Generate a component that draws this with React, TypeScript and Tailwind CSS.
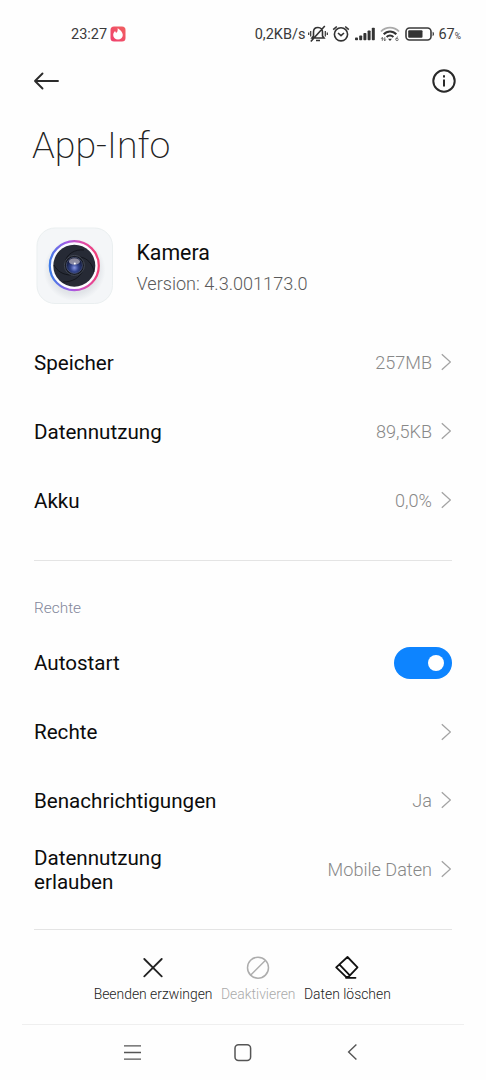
import type { ReactNode } from "react";

function Chevron() {
  return (
    <svg width="10" height="18" viewBox="0 0 10 18" fill="none" stroke="#a3a3a3" strokeWidth="1.3" className="mr-px ml-[9px] shrink-0">
      <path d="M0.8 1.200 9.400 9 0.8 16.800" />
    </svg>
  );
}

function Row({ label, value, children }: { label: ReactNode; value?: string; children?: ReactNode }) {
  return (
    <div className="flex h-[69px] items-center justify-between">
      <span className="text-[20.6px] leading-[24px] text-[#0c0c0c]">{label}</span>
      {children ?? (
        <span className="flex items-center">
          <span className="text-[18.1px] font-light text-[#888]">{value}</span>
          <Chevron />
        </span>
      )}
    </div>
  );
}

function StatusBar() {
  return (
    <div className="mt-[22px] flex h-6 items-center pr-[25px] pl-[71px] text-[#3a3a3a]">
      <span className="mt-px text-[14.5px]">23:27</span>
      <svg width="16" height="16" viewBox="0 0 16 16" className="ml-[3px]">
        <defs>
          <linearGradient id="flame" x1="0" y1="1" x2="1" y2="0">
            <stop offset="0" stopColor="#f0406f" />
            <stop offset="1" stopColor="#f0605f" />
          </linearGradient>
        </defs>
        <rect x="0.5" y="0.5" width="15" height="15" rx="3.5" fill="url(#flame)" />
        <path d="M7.6 2.2C10 3.500 12.800 6 12.800 9a4.800 4.600 0 0 1-9.600 0c0-1.700.9-3 2-3.900.2 1 .6 1.500 1.200 1.600C7.500 6 7.900 4 7.600 2.200z" fill="#fff" />
      </svg>
      <span className="mt-px ml-auto text-[14.500px]">0,2KB/s</span>
      <svg width="20" height="18" viewBox="0 0 20 18" fill="none" stroke="#333" strokeWidth="1.6" className="ml-[3px]">
        <path d="M4 13h12l-1.500-2V7c0-2.500-1.700-4.500-4.500-4.500S5.500 4.500 5.500 7v4zM8 15.500h4M2.800 16.500 16.800 1" />
        <path d="M2.700 6v5.500M17.300 6v5.500M.7 7.500v2.500M19.300 7.500v2.500" strokeWidth="1.200" />
      </svg>
      <svg width="18" height="18" viewBox="0 0 18 18" fill="none" stroke="#333" strokeWidth="1.600" className="ml-[4px]">
        <circle cx="9" cy="9.300" r="6.600" />
        <path d="M1.200 4.600 4.800 1.500M16.800 4.600 13.200 1.500M6 8 9 10.700l3-2.700" />
      </svg>
      <svg width="20" height="14" viewBox="0 0 20 14" fill="#333" className="ml-[5px]">
        <rect x="0" y="10.500" width="3" height="2.800" rx=".8" />
        <rect x="4.200" y="8.500" width="3" height="4.800" rx=".8" />
        <rect x="8.400" y="6" width="3" height="7.300" rx=".8" />
        <rect x="12.600" y="3.400" width="3" height="9.900" rx=".8" />
        <rect x="16.800" y=".7" width="3" height="12.600" rx=".8" />
      </svg>
      <svg width="20" height="16" viewBox="0 0 20 16" fill="none" className="ml-[5px]">
        <path d="M1 5.500c5-5.200 13-5.200 18 0" stroke="#aaa" strokeWidth="1.800" />
        <path d="M3.700 8.300c3.500-3.800 9.100-3.800 12.600 0M6.600 11c2-2.100 4.800-2.100 6.800 0" stroke="#333" strokeWidth="2" />
        <path d="m10 15-2-2.200h4z" fill="#333" />
        <path d="M2.300 11.500v3.300M4.800 11.300v3.300M1.200 12.700l1.100-1.200 1 1.200M3.800 13.500l1 1.200 1-1.200" stroke="#444" strokeWidth=".8" />
        <path d="M18 10.800c-1.500.5-2.200 1.600-2.200 2.700a1.200 1.200 0 1 0 1.300-1.200c-.7 0-1.100.4-1.300.9" stroke="#555" strokeWidth=".8" />
      </svg>
      <svg width="30" height="14" viewBox="0 0 30 14" className="ml-[5px]">
        <rect x="1" y="1" width="25" height="12" rx="3.500" fill="none" stroke="#3a3a3a" strokeWidth="1.600" />
        <rect x="3.200" y="3.200" width="14.300" height="7.600" rx="1" fill="#333" />
        <path d="M27.600 4.800c1.800.4 1.800 4 0 4.400z" fill="#333" />
      </svg>
      <span className="mt-px ml-[3px] text-[14.500px]">67</span>
      <span className="mt-[4px] text-[8.500px]">%</span>
    </div>
  );
}

function CameraIcon() {
  return (
    <svg width="77" height="77" viewBox="0 0 77 77">
      <defs>
        <linearGradient id="ring" x1="0" y1=".55" x2="1" y2=".45">
          <stop offset="0" stopColor="#3c7be8" />
          <stop offset=".4" stopColor="#a45be6" />
          <stop offset=".7" stopColor="#dd4cab" />
          <stop offset="1" stopColor="#f23e72" />
        </linearGradient>
        <radialGradient id="lens" cx=".5" cy=".65" r=".6">
          <stop offset="0" stopColor="#8997e4" />
          <stop offset=".4" stopColor="#34468f" />
          <stop offset="1" stopColor="#0b1028" />
        </radialGradient>
        <radialGradient id="shade">
          <stop offset=".75" stopColor="#9ca3af" stopOpacity=".22" />
          <stop offset="1" stopColor="#9ca3af" stopOpacity="0" />
        </radialGradient>
      </defs>
      <rect x="1" y="1" width="75.500" height="75.500" rx="18" fill="#f4f6f8" stroke="#eaeff0" />
      <circle cx="38.500" cy="43" r="31" fill="url(#shade)" />
      <circle cx="38.300" cy="38.700" r="24.500" fill="#fcfcff" stroke="url(#ring)" strokeWidth="2.200" />
      <circle cx="38.300" cy="38.700" r="21" fill="#262a35" />
      <g fill="none" stroke="#0e1017" strokeWidth=".8">
        <path d="M29 36C30 27 39 22 48 23M44 30c8 1 13 8 14 15M47 43c-3 8-11 12-20 12M35 48c-8 0-14-4-17-10" />
      </g>
      <circle cx="38.400" cy="38.400" r="10" fill="#161922" stroke="#444954" />
      <circle cx="38.400" cy="38.400" r="8" fill="url(#lens)" stroke="#5e6992" strokeWidth=".6" />
      <ellipse cx="38.400" cy="34.500" rx="5.500" ry="3.200" fill="#a9a5b4" opacity=".8" />
      <circle cx="38.800" cy="36.500" r="1" fill="#fff" />
    </svg>
  );
}

function Action({ label, className, children }: { label: string; className: string; children: ReactNode }) {
  return (
    <div className={`flex flex-col items-center ${className}`}>
      <div className="flex h-[26px] items-center">{children}</div>
      <span className="mt-[3px] text-[13.900px] leading-[20px] font-light whitespace-nowrap">{label}</span>
    </div>
  );
}

export default function App() {
  return (
    <div className="flex h-[1080px] w-[486px] flex-col overflow-hidden bg-[#fefefe] font-[Roboto,sans-serif]">
      <StatusBar />
      <header className="flex h-[70px] items-center justify-between pr-[30px] pl-[33px]">
        <svg width="27" height="20" viewBox="0 0 27 20" fill="none" stroke="#2b2b2b" strokeWidth="1.900" strokeLinecap="round" strokeLinejoin="round">
          <path d="M25 10H2M9.500 2.500 2 10l7.500 7.500" />
        </svg>
        <svg width="24" height="24" viewBox="0 0 24 24" fill="none" stroke="#292929" strokeWidth="2">
          <circle cx="12" cy="12" r="10.700" />
          <path d="M12 10.500v7M12 6.300v2.200" />
        </svg>
      </header>
      <h1 className="h-[60px] pl-[32px] text-[37.500px] leading-[59px] font-extralight text-[#222]">App-Info</h1>

      <main className="px-[34px]">
        <section className="mt-[51px] flex h-[77px] items-center pl-[2px]">
          <CameraIcon />
          <div className="mt-[6px] ml-[23.500px]">
            <div className="text-[21.300px] leading-[30px] text-[#0c0c0c]">Kamera</div>
            <div className="text-[18.100px] leading-[32px] font-light text-[#5a5a5a]">Version: 4.3.001173.0</div>
          </div>
        </section>
        <section className="mt-[24px]">
          <Row label="Speicher" value="257MB" />
          <Row label="Datennutzung" value="89,5KB" />
          <Row label="Akku" value="0,0%" />
        </section>
        <div className="mt-[25px] h-px bg-[#e4e4e4]" />
        <h2 className="mt-[31px] h-8 text-[15.400px] leading-8 font-light text-[#82869a]">Rechte</h2>
        <section className="mt-[4px]">
          <Row label="Autostart">
            <div className="flex h-8 w-[58px] items-center justify-end rounded-full bg-[#0d84ff] pr-2">
              <div className="size-4 rounded-full bg-white" />
            </div>
          </Row>
          <Row label="Rechte" />
          <Row label="Benachrichtigungen" value="Ja" />
          <Row label={<>Datennutzung<br />erlauben</>} value="Mobile Daten" />
        </section>
        <div className="mt-[25px] h-px bg-[#e4e4e4]" />
      </main>

      <div className="mt-[25px] flex h-[69px] justify-center gap-[8.500px] pr-[1.500px]">
        <Action label="Beenden erzwingen" className="text-[#222]">
          <svg width="20" height="20" viewBox="0 0 20 20" stroke="#222" strokeWidth="1.800" strokeLinecap="round">
            <path d="m1.300 1 17.400 17.400M18.700 1 1.300 18.400" />
          </svg>
        </Action>
        <Action label="Deaktivieren" className="text-[#aaa]">
          <svg width="24" height="24" viewBox="0 0 24 24" fill="none" stroke="#adadad" strokeWidth="1.500">
            <circle cx="12" cy="11.700" r="10.500" />
            <path d="M4.500 19.200 19.500 4.200" />
          </svg>
        </Action>
        <Action label="Daten löschen" className="text-[#222]">
          <svg width="24" height="24" viewBox="0 0 24 24" fill="none" stroke="#111" strokeWidth="1.800" strokeLinejoin="round" strokeLinecap="round">
            <path d="M12.500 1 22.500 11.300 13.500 20.800 11 20.800 1.200 11.300zM4.300 8.400 14.800 19.300M11 21.800h9.500" />
          </svg>
        </Action>
      </div>

      <nav className="mx-[22px] flex h-[56px] items-center border-t border-[#efefef] pl-[102px]">
        <svg width="17" height="16" viewBox="0 0 17 16" stroke="#555" strokeWidth="1.300">
          <path d="M0 .8h17M0 7.500h17M0 14.200h17" />
        </svg>
        <svg width="18" height="18" viewBox="0 0 18 18" fill="none" stroke="#555" strokeWidth="1.500" className="ml-[93px]">
          <rect x="1" y=".8" width="15.600" height="15.600" rx="3.500" />
        </svg>
        <svg width="10" height="17" viewBox="0 0 10 17" fill="none" stroke="#555" strokeWidth="1.400" className="ml-[95px]">
          <path d="M9.400.5 1.600 8l7.800 7.500" />
        </svg>
      </nav>
    </div>
  );
}
